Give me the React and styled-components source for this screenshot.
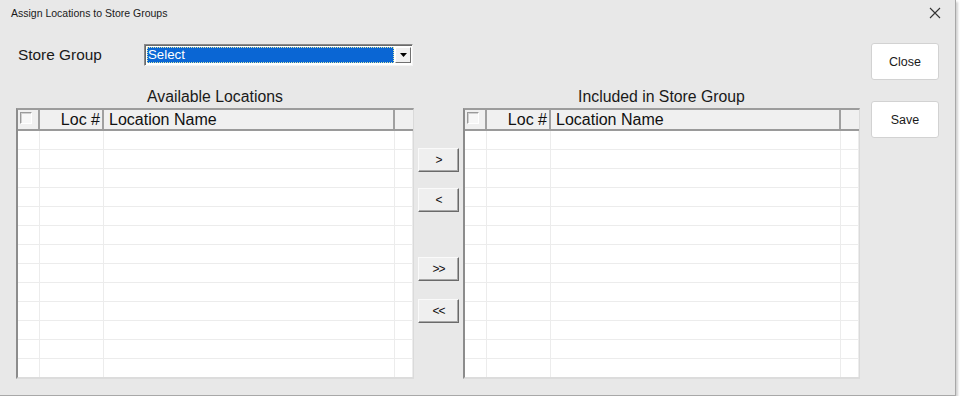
import React from "react";
import styled, { createGlobalStyle } from "styled-components";

const Global = createGlobalStyle`
  html, body { margin: 0; padding: 0; background: #ffffff; }
  body { font-family: "Liberation Sans", Arial, sans-serif; }
  * { box-sizing: border-box; }
`;

const Window = styled.div`
  width: 956px;
  height: 396px;
  background: #e8e8e8;
  border-right: 1px solid #a8a8a8;
  border-bottom: 1px solid #a8a8a8;
  box-shadow: 2px 2px 2px rgba(0, 0, 0, 0.18);
  display: flex;
  flex-direction: column;
`;

const TitleBar = styled.div`
  height: 26px;
  display: flex;
  align-items: center;
  justify-content: space-between;
  padding: 0 13px 0 11px;
`;

const TitleText = styled.span`
  font-family: "Liberation Sans", Arial, sans-serif;
  font-size: 10.5px;
  color: #1a1a1a;
`;

const CloseX = styled.button`
  border: 0;
  background: transparent;
  padding: 0;
  width: 14px;
  height: 14px;
  display: flex;
  align-items: center;
  justify-content: center;
`;

const Content = styled.div`
  display: flex;
  padding-left: 16px;
`;

const MainColumn = styled.div`
  width: 844px;
  display: flex;
  flex-direction: column;
`;

const StoreGroupRow = styled.div`
  margin-top: 18px;
  height: 22px;
  display: flex;
  align-items: center;
`;

const FieldLabel = styled.label`
  width: 128px;
  padding-left: 2px;
  font-size: 15.4px;
  color: #1a1a1a;
`;

const SelectBox = styled.div`
  width: 269px;
  height: 22px;
  display: flex;
  padding: 2px 1px 2px 2px;
  background: #ffffff;
  border-top: 1px solid #8a8a8a;
  border-left: 1px solid #8a8a8a;
  border-right: 1px solid #f4f4f4;
  border-bottom: 1px solid #f4f4f4;
  box-shadow: inset 1px 1px 0 #6a6a6a;
`;

const SelectValue = styled.div`
  flex: 1;
  background: #0a66d4;
  color: #ffffff;
  font-size: 13.3px;
  line-height: 16px;
  padding-left: 1px;
  outline: 1px dotted #d6e6a8;
  outline-offset: -1px;
`;

const DropButton = styled.div`
  width: 16px;
  margin-left: 1px;
  background: #f0f0f0;
  border-top: 1px solid #ffffff;
  border-left: 1px solid #ffffff;
  border-right: 1px solid #707070;
  border-bottom: 1px solid #707070;
  display: flex;
  align-items: center;
  justify-content: center;
`;

const ListsRow = styled.div`
  margin-top: 22px;
  display: flex;
`;

const Panel = styled.div`
  width: ${(p) => p.$width}px;
  display: flex;
  flex-direction: column;
`;

const PanelTitle = styled.div`
  height: 20px;
  line-height: 18px;
  padding-bottom: 2px;
  text-align: center;
  font-size: 15.8px;
  color: #1a1a1a;
`;

const Grid = styled.div`
  height: 271px;
  background: #ffffff;
  border-top: 2px solid #9c9c9c;
  border-left: 2px solid #8c8c8c;
  border-right: 1px solid #dadada;
  border-bottom: 2px solid #dcdcdc;
  overflow: hidden;
  display: flex;
  flex-direction: column;
`;

const GridRow = styled.div`
  display: grid;
  grid-template-columns: 22px 64px 1fr 18px;
  height: ${(p) => (p.$header ? 21 : 19)}px;
  flex-shrink: 0;
  background: ${(p) => (p.$header ? "#f0f0f0" : "#ffffff")};
  border-bottom: ${(p) => (p.$header ? "2px solid #9a9a9a" : "1px solid #ececec")};
`;

const HeadCell = styled.div`
  border-right: ${(p) => (p.$last ? "0" : "2px solid #a0a0a0")};
  font-size: 16px;
  line-height: 19px;
  color: #111;
  padding: 0 ${(p) => (p.$right ? "2px" : "0")} 0 ${(p) => (p.$right ? "0" : "5px")};
  white-space: nowrap;
  overflow: hidden;
  display: flex;
  justify-content: ${(p) => (p.$right ? "flex-end" : "flex-start")};
  align-items: center;
`;

const CheckCell = styled.div`
  border-right: 2px solid #a0a0a0;
  padding: 2px 0 0 2px;
`;

const CheckBox = styled.span`
  display: block;
  width: 12px;
  height: 12px;
  background: #f7f7f7;
  border-top: 1px solid #9a9a9a;
  border-left: 1px solid #9a9a9a;
  border-right: 1px solid #ffffff;
  border-bottom: 1px solid #ffffff;
  box-shadow: inset 1px 1px 0 #d0d0d0;
`;

const BodyCell = styled.div`
  border-right: 1px solid #ececec;
`;

const Middle = styled.div`
  width: 49px;
  padding: 60px 0 0 4px;
  display: flex;
  flex-direction: column;
  align-items: flex-start;
`;

const MoveButton = styled.button`
  width: 41px;
  height: 24px;
  margin-top: ${(p) => p.$mt}px;
  padding: 0;
  background: #efefef;
  border-top: 1px solid #fafafa;
  border-left: 1px solid #fafafa;
  border-right: 1px solid #6a6a6a;
  border-bottom: 1px solid #6a6a6a;
  box-shadow: inset -1px -1px 0 #a8a8a8;
  font-family: "Liberation Sans", Arial, sans-serif;
  font-size: 12px;
  color: #111;
  letter-spacing: -1px;
`;

const SideColumn = styled.div`
  margin-left: 11px;
  padding-top: 17px;
  display: flex;
  flex-direction: column;
  gap: 21px;
`;

const SideButton = styled.button`
  width: 68px;
  height: 37px;
  background: #ffffff;
  border: 1px solid #d2d2d2;
  border-radius: 3px;
  font-family: "Liberation Sans", Arial, sans-serif;
  font-size: 12.5px;
  color: #1a1a1a;
  padding: 0;
`;

const ROWS = 13;

function LocationGrid() {
  return (
    <Grid>
      <GridRow $header>
        <CheckCell>
          <CheckBox />
        </CheckCell>
        <HeadCell $right>Loc #</HeadCell>
        <HeadCell>Location Name</HeadCell>
        <HeadCell $last />
      </GridRow>
      {Array.from({ length: ROWS }).map((_, i) => (
        <GridRow key={i}>
          <BodyCell />
          <BodyCell />
          <BodyCell />
          <BodyCell />
        </GridRow>
      ))}
    </Grid>
  );
}

export default function App() {
  return (
    <>
      <Global />
      <Window>
        <TitleBar>
          <TitleText>Assign Locations to Store Groups</TitleText>
          <CloseX aria-label="close">
            <svg width="12" height="12" viewBox="0 0 12 12">
              <path d="M1 1 L11 11 M11 1 L1 11" stroke="#333" strokeWidth="1.1" fill="none" />
            </svg>
          </CloseX>
        </TitleBar>
        <Content>
          <MainColumn>
            <StoreGroupRow>
              <FieldLabel>Store Group</FieldLabel>
              <SelectBox>
                <SelectValue>Select</SelectValue>
                <DropButton>
                  <svg width="7" height="4" viewBox="0 0 7 4">
                    <path d="M0 0 H7 L3.5 4 Z" fill="#000" />
                  </svg>
                </DropButton>
              </SelectBox>
            </StoreGroupRow>
            <ListsRow>
              <Panel $width={398}>
                <PanelTitle>Available Locations</PanelTitle>
                <LocationGrid />
              </Panel>
              <Middle>
                <MoveButton $mt={0}>&gt;</MoveButton>
                <MoveButton $mt={16}>&lt;</MoveButton>
                <MoveButton $mt={45}>&gt;&gt;</MoveButton>
                <MoveButton $mt={18}>&lt;&lt;</MoveButton>
              </Middle>
              <Panel $width={397}>
                <PanelTitle>Included in Store Group</PanelTitle>
                <LocationGrid />
              </Panel>
            </ListsRow>
          </MainColumn>
          <SideColumn>
            <SideButton>Close</SideButton>
            <SideButton>Save</SideButton>
          </SideColumn>
        </Content>
      </Window>
    </>
  );
}
